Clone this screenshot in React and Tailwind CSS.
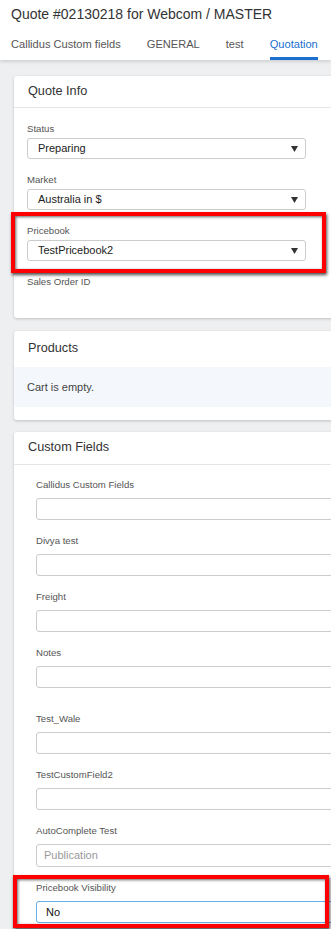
import React from "react";

const tabs = ["Callidus Custom fields", "GENERAL", "test", "Quotation"];

function Caret() {
  return (
    <svg width="7" height="6" viewBox="0 0 7 6" className="shrink-0">
      <path d="M0 0 H7 L3.5 6 Z" fill="#333" />
    </svg>
  );
}

function Select({ value }) {
  return (
    <div className="flex h-[21px] w-[279px] items-center justify-between rounded-[3px] border border-[#cccccc] bg-white pl-[10px] pr-[7px] text-[11px] text-[#222]">
      <span>{value}</span>
      <Caret />
    </div>
  );
}

function RedBox({ className }) {
  return (
    <div
      className={
        "pointer-events-none absolute border-[4px] border-[#ff0000] shadow-[1px_2px_3px_rgba(0,0,0,0.7),inset_1px_1px_3px_rgba(0,0,0,0.6)] " +
        className
      }
    />
  );
}

function InfoField({ label, value, mark }) {
  return (
    <div className="relative mb-[14px]">
      <div className="mb-[3px] text-[9.6px] leading-[13px] text-[#555]">{label}</div>
      <Select value={value} />
      {mark && <RedBox className="left-[-16px] top-[-12px] h-[61px] w-[315px]" />}
    </div>
  );
}

function CustomField({ label, placeholder, value, focus, extra, tall, mark }) {
  return (
    <div className={"relative pb-[14px] " + (extra ? "pt-[10px]" : "")}>
      <div className="mb-[7px] text-[9.6px] leading-[13px] text-[#555]">{label}</div>
      <div
        className={
          "flex w-[320px] items-center rounded-[3px] border bg-white text-[11px] " +
          (tall ? "h-[23px] " : "h-[22px] ") +
          (focus ? "border-[#66afe9] pl-[9px] text-[#111]" : "border-[#cccccc] pl-[7px] text-[#999]")
        }
      >
        {value || placeholder || ""}
      </div>
      {mark && <RedBox className="left-[-23px] top-[-6px] h-[53px] w-[316px]" />}
    </div>
  );
}

export default function App() {
  return (
    <div className="h-[929px] w-[331px] overflow-hidden bg-[#eeeff1] font-['Liberation_Sans',Arial,sans-serif]">
      {/* Header */}
      <div className="relative z-10 h-[60px] bg-white shadow-[0_1px_4px_rgba(0,0,0,0.18)]">
        <div className="pl-[11px] pt-[6px] text-[14px] leading-[16px] text-[#333]">
          Quote #02130218 for Webcom / MASTER
        </div>
        <div className="mt-[16px] flex gap-[26px] whitespace-nowrap pl-[11px] text-[11.1px] leading-[13px]">
          {tabs.map((t) => (
            <div
              key={t}
              className={
                t === "Quotation"
                  ? "border-b-[3px] border-[#1a6fd0] pb-[6px] text-[#1a6fd0]"
                  : "pb-[9px] text-[#555]"
              }
            >
              {t}
            </div>
          ))}
        </div>
      </div>

      <div className="pl-[14px] pt-[16px]">
        {/* Quote Info */}
        <div className="w-[340px] rounded-[3px] bg-white shadow-[0_1px_3px_rgba(0,0,0,0.2)]">
          <div className="flex h-[32px] items-center border-b border-[#e5e5e5] pl-[14px] text-[12.7px] text-[#333]">
            Quote Info
          </div>
          <div className="px-[13px] pb-[13px] pt-[14px]">
            <InfoField label="Status" value="Preparing" />
            <InfoField label="Market" value="Australia in $" />
            <InfoField label="Pricebook" value="TestPricebook2" mark />
            <div className="h-[30px] text-[9.6px] leading-[13px] text-[#555]">Sales Order ID</div>
          </div>
        </div>

        {/* Products */}
        <div className="mt-[13px] w-[340px] rounded-[3px] bg-white pb-[13px] shadow-[0_1px_3px_rgba(0,0,0,0.2)]">
          <div className="flex h-[36px] items-center pl-[14px] text-[12.7px] text-[#333]">Products</div>
          <div className="flex h-[40px] items-center bg-[#f4f8fc] pl-[13px] text-[11px] text-[#444]">
            Cart is empty.
          </div>
        </div>

        {/* Custom Fields */}
        <div className="mt-[12px] w-[340px] rounded-[3px] bg-white shadow-[0_1px_3px_rgba(0,0,0,0.2)]">
          <div className="flex h-[33px] items-center border-b border-[#e5e5e5] pl-[14px] text-[12.7px] text-[#333]">
            Custom Fields
          </div>
          <div className="pl-[22px] pt-[13px]">
            <CustomField label="Callidus Custom Fields" />
            <CustomField label="Divya test" />
            <CustomField label="Freight" />
            <CustomField label="Notes" />
            <CustomField label="Test_Wale" extra />
            <CustomField label="TestCustomField2" />
            <CustomField label="AutoComplete Test" placeholder="Publication" tall />
            <CustomField label="Pricebook Visibility" value="No" focus mark />
          </div>
        </div>
      </div>
    </div>
  );
}
